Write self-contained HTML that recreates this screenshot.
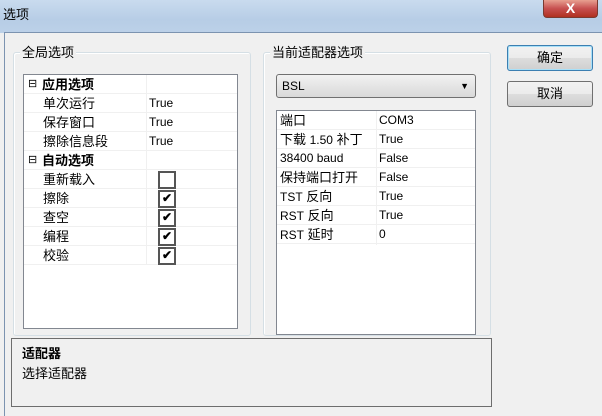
<!DOCTYPE html>
<html><head><meta charset="utf-8"><style>
*{margin:0;padding:0;box-sizing:border-box}
body{width:602px;height:416px;overflow:hidden;font-family:"Liberation Sans","Noto Sans CJK SC",sans-serif;font-size:12px;color:#000;background:#f0f0f0;position:relative}
.abs{position:absolute}
#tb{left:0;top:0;width:602px;height:33px;background:linear-gradient(#c9dbee,#b7cde6 60%,#bcd1e8)}
#body{left:4px;top:32px;width:598px;height:384px;background:#f0f0f0;border-top:1px solid #7c93b0;border-left:1px solid #7c93b0}
.grp{border:1px solid #d5dfe5;border-radius:3px;box-shadow:inset 1px 1px 0 #fff}
.gl{background:#f0f0f0;padding:0 2px;font-size:13px}
.list{background:#fff;border:1px solid #828790}
.row{position:absolute;left:0;height:19px;line-height:19px;border-bottom:1px solid #f0f0f0;width:100%;font-size:13px}
.row span+span{font-size:12px}
.btn{border:1px solid #707070;border-radius:3px;background:linear-gradient(#f2f2f2,#ebebeb 50%,#dddddd 51%,#cfcfcf);text-align:center;line-height:24px;font-size:13px}
.cb{position:absolute;width:18px;height:18px;border:2px solid #555;background:#fff;font-size:12px;line-height:13px;text-align:center;font-weight:bold}
</style></head><body>
<div id="tb" class="abs"></div>
<div class="abs" style="left:3px;top:4px;font-size:13px">选项</div>
<div class="abs" style="left:543px;top:0;width:55px;height:18px;background:linear-gradient(#e8a090,#c75050 50%,#b03020);border:1px solid #7a3a30;border-top:none;border-radius:0 0 4px 4px;color:#fff;text-align:center;font-weight:bold;line-height:16px;font-size:14px">X</div>
<div id="body" class="abs"></div>

<div class="abs grp" style="left:13px;top:52px;width:238px;height:284px"></div>
<div class="abs gl" style="left:20px;top:42px">全局选项</div>
<div class="abs grp" style="left:263px;top:52px;width:228px;height:284px"></div>
<div class="abs gl" style="left:270px;top:42px">当前适配器选项</div>

<div class="abs list" style="left:23px;top:74px;width:215px;height:255px;overflow:hidden">
 <div style="position:absolute;left:122px;top:0;width:1px;height:189px;background:#f0f0f0"></div>
 <div class="row" style="top:0"><b style="position:absolute;left:4px;font-size:11px;font-weight:normal">⊟</b><b style="position:absolute;left:18px;font-size:13px">应用选项</b></div>
 <div class="row" style="top:19px"><span style="position:absolute;left:19px">单次运行</span><span style="position:absolute;left:125px">True</span></div>
 <div class="row" style="top:38px"><span style="position:absolute;left:19px">保存窗口</span><span style="position:absolute;left:125px">True</span></div>
 <div class="row" style="top:57px"><span style="position:absolute;left:19px">擦除信息段</span><span style="position:absolute;left:125px">True</span></div>
 <div class="row" style="top:76px"><b style="position:absolute;left:4px;font-size:11px;font-weight:normal">⊟</b><b style="position:absolute;left:18px;font-size:13px">自动选项</b></div>
 <div class="row" style="top:95px"><span style="position:absolute;left:19px">重新载入</span></div>
 <div class="row" style="top:114px"><span style="position:absolute;left:19px">擦除</span></div>
 <div class="row" style="top:133px"><span style="position:absolute;left:19px">查空</span></div>
 <div class="row" style="top:152px"><span style="position:absolute;left:19px">编程</span></div>
 <div class="row" style="top:171px"><span style="position:absolute;left:19px">校验</span></div>
 <div class="cb" style="left:134px;top:96px"></div>
 <div class="cb" style="left:134px;top:115px">✔</div>
 <div class="cb" style="left:134px;top:134px">✔</div>
 <div class="cb" style="left:134px;top:153px">✔</div>
 <div class="cb" style="left:134px;top:172px">✔</div>
</div>

<div class="abs" style="left:276px;top:74px;width:200px;height:24px;border:1px solid #707070;border-radius:3px;background:linear-gradient(#f2f2f2,#e5e5e5 50%,#d9d9d9);line-height:22px;padding-left:5px">BSL<span style="position:absolute;right:6px;top:0;font-size:9px">▼</span></div>

<div class="abs list" style="left:276px;top:110px;width:200px;height:225px;overflow:hidden">
 <div style="position:absolute;left:99px;top:0;width:1px;height:134px;background:#f0f0f0"></div>
 <div class="row" style="top:0"><span style="position:absolute;left:3px">端口</span><span style="position:absolute;left:102px">COM3</span></div>
 <div class="row" style="top:19px"><span style="position:absolute;left:3px">下载 <small style="font-size:12px">1.50</small> 补丁</span><span style="position:absolute;left:102px">True</span></div>
 <div class="row" style="top:38px"><span style="position:absolute;left:3px;font-size:12px">38400 baud</span><span style="position:absolute;left:102px">False</span></div>
 <div class="row" style="top:57px"><span style="position:absolute;left:3px">保持端口打开</span><span style="position:absolute;left:102px">False</span></div>
 <div class="row" style="top:76px"><span style="position:absolute;left:3px"><small style="font-size:12px">TST</small> 反向</span><span style="position:absolute;left:102px">True</span></div>
 <div class="row" style="top:95px"><span style="position:absolute;left:3px"><small style="font-size:12px">RST</small> 反向</span><span style="position:absolute;left:102px">True</span></div>
 <div class="row" style="top:114px"><span style="position:absolute;left:3px"><small style="font-size:12px">RST</small> 延时</span><span style="position:absolute;left:102px">0</span></div>
</div>

<div class="abs btn" style="left:507px;top:45px;width:86px;height:26px;border-color:#3c7fb1;box-shadow:inset 0 0 0 1px #a8e0f8">确定</div>
<div class="abs btn" style="left:507px;top:81px;width:86px;height:26px">取消</div>

<div class="abs" style="left:11px;top:338px;width:481px;height:69px;border:1px solid #6d6d6d;background:#f0f0f0">
 <b style="position:absolute;left:10px;top:4px;font-size:13px">适配器</b>
 <span style="position:absolute;left:10px;top:24px;font-size:13px">选择适配器</span>
</div>
</body></html>
